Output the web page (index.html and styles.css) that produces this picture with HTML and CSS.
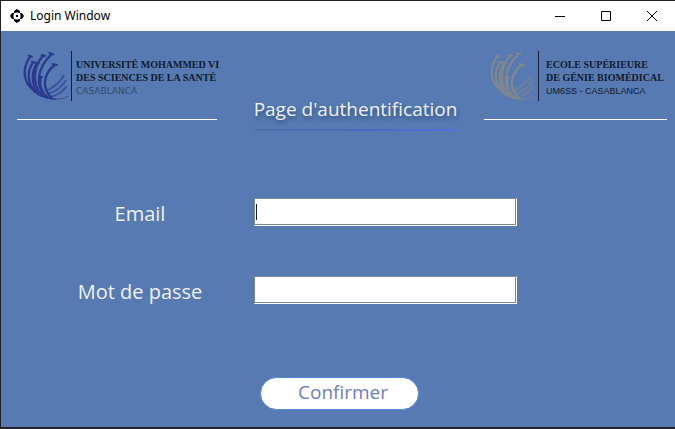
FILE: index.html
```html
<!DOCTYPE html>
<html lang="fr">
<head>
<meta charset="utf-8">
<title>Login Window</title>
<link rel="stylesheet" href="styles.css">
</head>
<body>
<svg class="defs" aria-hidden="true">
  <symbol id="hand" viewBox="6 12 150 150">
    <g fill="none" stroke="currentColor" stroke-linecap="round">
      <g stroke-width="7">
        <path d="M35 28C12 56 10 98 36 122"/>
        <path d="M42 46C24 72 24 108 48 134"/>
        <path d="M55 48C36 74 36 112 58 142"/>
        <path d="M73 26C42 58 38 108 68 146"/>
        <path d="M98 21C56 62 46 112 80 150"/>
        <path d="M65 90C60 116 68 138 86 152"/>
        <path d="M107 54C74 80 66 122 98 154"/>
      </g>
      <path stroke-width="6" d="M29 26l10 3M68 24l11 3M91 18l12 4M101 51l13 3M38 44l8 3M50 46l9 3M61 89l8 2"/>
      <path stroke-width="4" d="M24 108Q50 152 108 157M36 122Q66 154 98 155"/>
      <g stroke-width="6" opacity=".6">
        <path d="M134 86Q118 114 84 130"/>
        <path d="M139 102Q122 130 88 140"/>
        <path d="M141 120Q122 145 94 149"/>
        <path stroke-width="3" d="M147 148Q128 159 98 155"/>
      </g>
    </g>
  </symbol>
</svg>
<div class="window">
  <header class="titlebar">
    <svg class="app-icon" width="14" height="14" viewBox="0 0 14 14" aria-hidden="true">
      <path d="M7 0l3 2v2H4V2zM7 14l3-2v-2H4v2zM0 7l2-3h2v6H2zM14 7l-2-3h-2v6h2z"/>
      <circle cx="7" cy="7" r="3.600" fill="#fff"/><circle cx="7" cy="7" r="1.200"/>
    </svg>
    <span class="caption">Login Window</span>
    <button class="control" type="button" aria-label="Réduire"><svg width="10" height="10" viewBox="0 0 10 10"><path d="M0 5.500h10"/></svg></button>
    <button class="control" type="button" aria-label="Agrandir"><svg width="10" height="10" viewBox="0 0 10 10"><path d="M.5.5h9v9h-9z"/></svg></button>
    <button class="control" type="button" aria-label="Fermer"><svg width="10" height="10" viewBox="0 0 10 10"><path d="M0 0l10 10M10 0L0 10"/></svg></button>
  </header>
  <main>
    <div class="banner">
      <div class="brand university">
        <svg class="mark"><use href="#hand"/></svg>
        <p class="brand-text">UNIVERSITÉ MOHAMMED VI<br>DES SCIENCES DE LA SANTÉ<br><span class="city">CASABLANCA</span></p>
      </div>
      <h1>Page d'authentification</h1>
      <div class="brand school">
        <svg class="mark"><use href="#hand"/></svg>
        <p class="brand-text">ECOLE SUPÉRIEURE<br>DE GÉNIE BIOMÉDICAL<br><span class="city">UM6SS - CASABLANCA</span></p>
      </div>
    </div>
    <form class="login">
      <label for="email">Email</label>
      <div class="field"><input id="email" type="text"><span class="caret"></span></div>
      <label for="password">Mot de passe</label>
      <div class="field"><input id="password" type="password"></div>
      <button class="confirm" type="button">Confirmer</button>
    </form>
  </main>
</div>
</body>
</html>
```
FILE: styles.css
```css
* { box-sizing: border-box; }
body { margin: 0; font-family: "Open Sans", "Noto Sans", sans-serif; }
.defs { position: absolute; width: 0; height: 0; }
.window {
  min-height: 100vh;
  display: flex;
  flex-direction: column;
  border: solid #202229;
  border-width: 1px 0 2px 1px;
  background: #567ab1;
}
.titlebar {
  display: flex;
  align-items: center;
  height: 30px;
  padding-left: 9px;
  background: #fff;
  color: #000;
}
.app-icon { margin-right: 6px; }
.caption { flex: 1; font-size: 12px; line-height: 16px; font-family: "Noto Sans", sans-serif; }
.control {
  display: grid;
  place-items: center;
  width: 46px;
  height: 30px;
  padding: 0;
  border: 0;
  background: none;
}
.control svg { fill: none; stroke: #000; }
.banner {
  display: grid;
  grid-template-columns: 200px 1fr 183px;
  padding: 16px 8px 0 16px;
}
.brand {
  display: flex;
  align-items: flex-start;
  height: 73px;
  padding: 4px 0 0 4px;
  border-bottom: 1px solid #fff;
}
.mark { width: 50px; height: 50px; flex: none; }
.university .mark { color: #2a3a8e; }
.school .mark { color: #81868f; }
.brand-text {
  margin: 0;
  padding: 7px 0 0 4px;
  height: 50px;
  border-left: 1px solid #151d2e;
  font: bold 10px/13px "Liberation Serif", serif;
  color: #101a2c;
  white-space: nowrap;
}
.school .brand-text { padding-left: 7px; }
.city { font: 9px/11px "Liberation Sans", sans-serif; color: #34496d; }
.university .city { font-family: "DejaVu Sans", sans-serif; }
.school .city { color: #101a2c; }
h1 {
  justify-self: center;
  align-self: end;
  margin: 0 0 -11px 10px;
  padding-bottom: 6px;
  border-bottom: 2px solid;
  border-image: linear-gradient(90deg, #4f70a9, #5067c4 60%, #5a6ce0) 1;
  font-size: 19px;
  font-weight: 400;
  line-height: 28px;
  color: #f0f0f0;
  text-shadow: 1px 3px 4px #304f80;
  white-space: nowrap;
}
.login {
  display: grid;
  grid-template-columns: 225px 263px;
  grid-auto-rows: 28px;
  column-gap: 28px;
  row-gap: 50px;
  padding-top: 78px;
}
label {
  padding-left: 53px;
  text-align: center;
  font-size: 20px;
  line-height: 32px;
  color: #f0f0f0;
}
.field { position: relative; }
.field input {
  display: block;
  width: 100%;
  height: 28px;
  padding: 2px;
  border: 1px solid;
  border-color: #7a8894 #fff #fff #7a8894;
  box-shadow: inset -1px -1px #7a8894;
  background: #fff;
  font: 18px "Open Sans", sans-serif;
  outline: 0;
}
.caret { position: absolute; left: 2px; top: 6px; width: 1px; height: 16px; background: #222; }
.confirm {
  grid-column: 2;
  width: 159px;
  height: 33px;
  margin: 23px 0 0 6px;
  padding: 0 0 3px 7px;
  border: 1px solid #5088e0;
  border-radius: 17px;
  background: #fff;
  color: #6c7cc0;
  font: 19px/26px "Open Sans", sans-serif;
}
```
